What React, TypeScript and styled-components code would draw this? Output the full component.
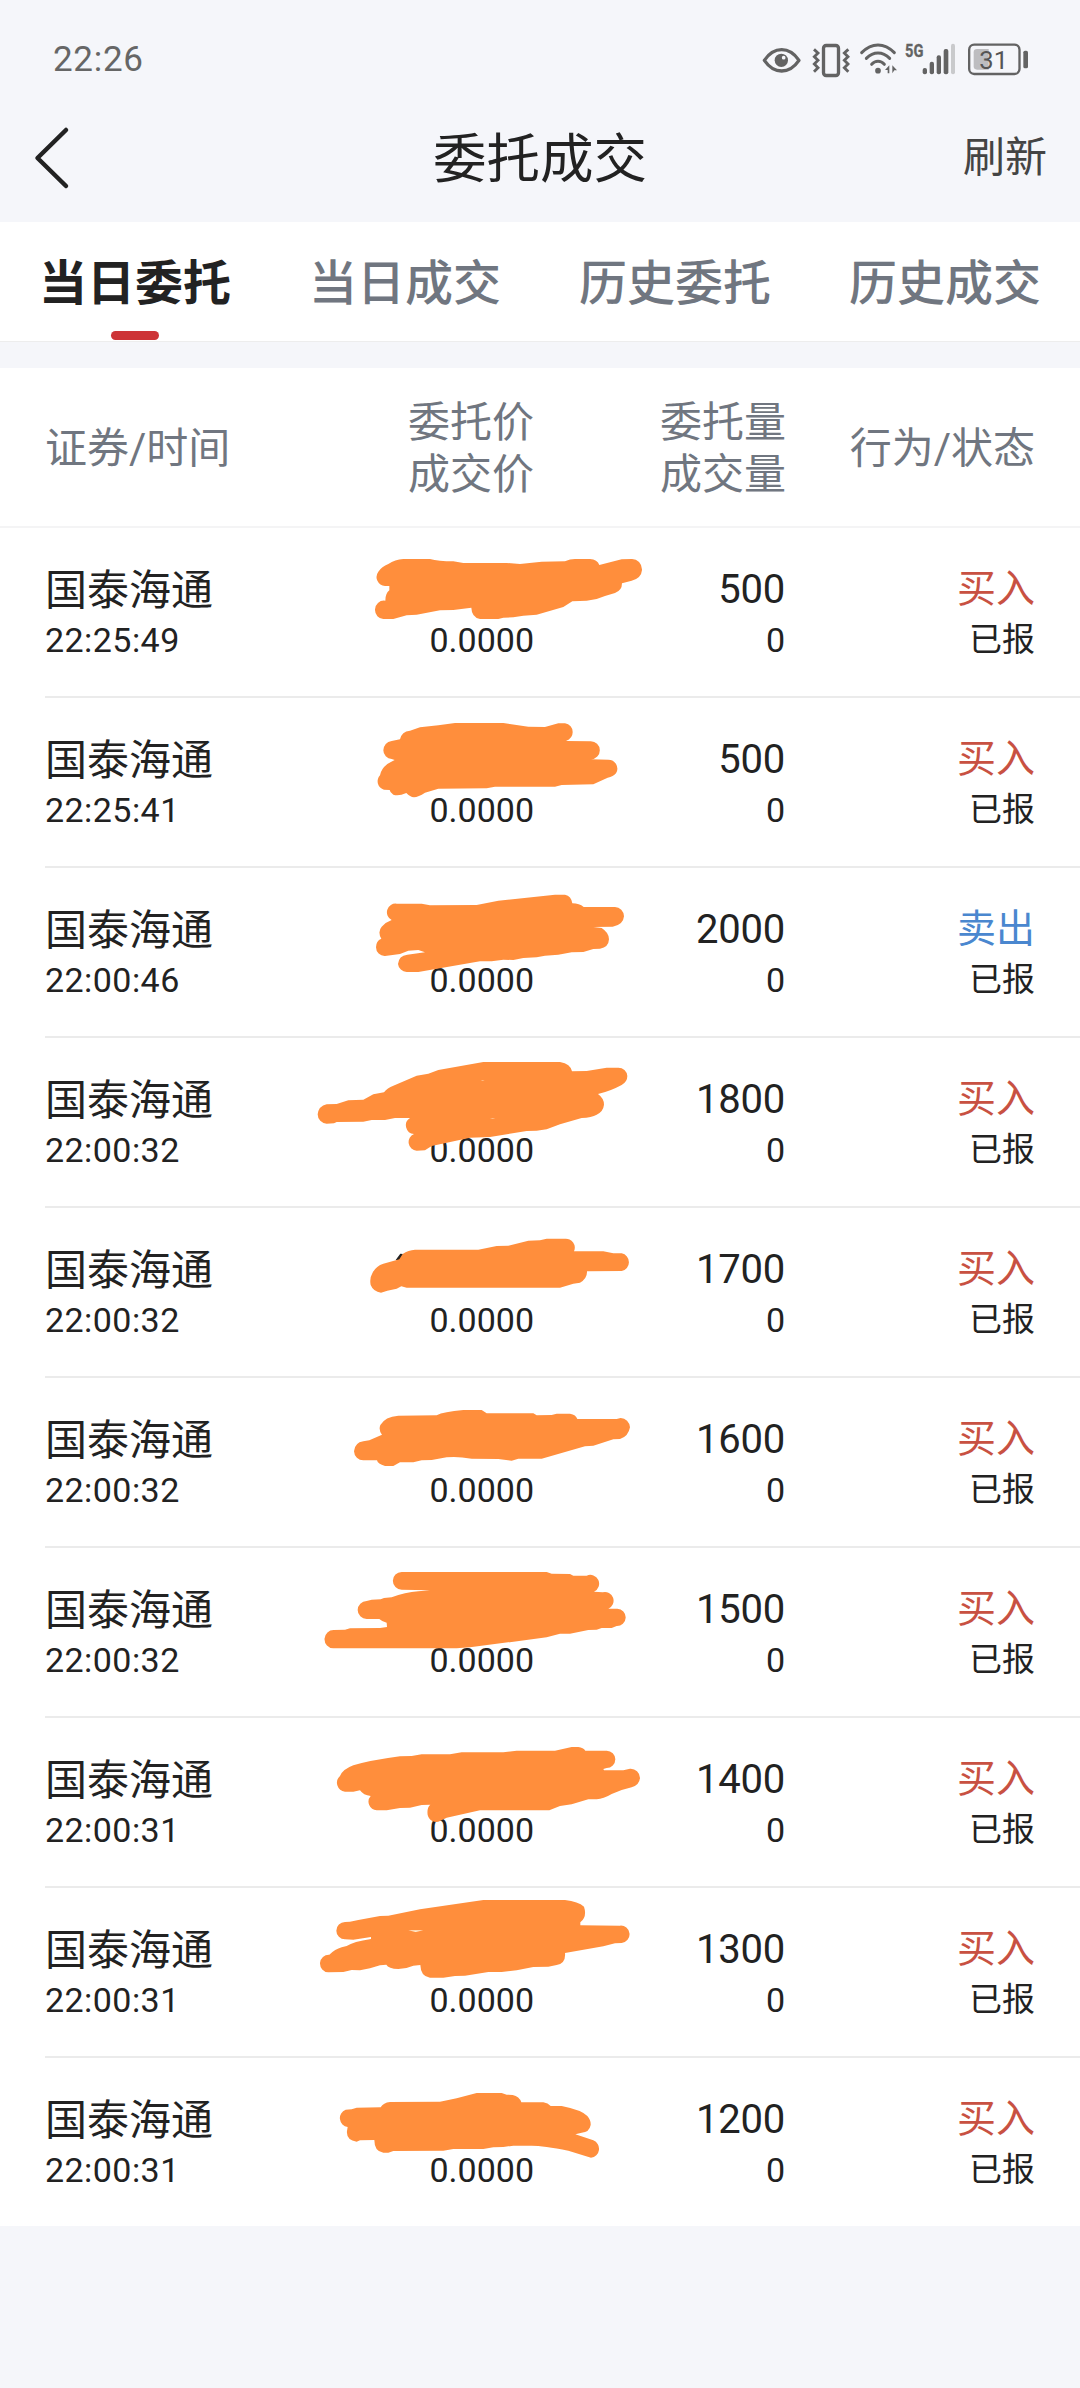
import React from "react";
import styled, { createGlobalStyle } from "styled-components";

const GlobalStyle = createGlobalStyle`
  * { box-sizing: border-box; }
  body {
    margin: 0;
    background: #f5f6fa;
    font-family: Roboto, "Noto Sans CJK SC", sans-serif;
    color: #222;
  }
`;

const Screen = styled.div`
  width: 1080px;
  min-height: 2388px;
  display: flex;
  flex-direction: column;
  background: #f5f6fa;
`;

const StatusBar = styled.header`
  height: 102px;
  padding: 18px 48px 0 53px;
  display: flex;
  align-items: center;
  justify-content: space-between;
`;

const Clock = styled.span`
  font-size: 35px;
  line-height: 40px;
  letter-spacing: 0.7px;
  color: #666;
`;

const StatusIcons = styled.div`
  display: flex;
  color: #636363;
  svg { display: block; height: 40px; }
`;

const NavBar = styled.nav`
  height: 120px;
  padding: 0 33px 8px;
  display: grid;
  grid-template-columns: 1fr auto 1fr;
  align-items: center;
`;

const BackButton = styled.button`
  width: 38px;
  height: 64px;
  padding: 0;
  border: 0;
  background: none;
  svg { display: block; }
`;

const Title = styled.h1`
  margin: 3px 0 0;
  font-size: 53.5px;
  font-weight: 400;
  line-height: 70px;
`;

const Refresh = styled.button`
  justify-self: end;
  padding: 0;
  border: 0;
  background: none;
  font: inherit;
  font-size: 42px;
  line-height: 60px;
  color: #444;
`;

const Tabs = styled.div`
  height: 120px;
  display: grid;
  grid-template-columns: repeat(4, 270px);
  background: #fff;
  border-bottom: 1px solid #ededed;
`;

const Tab = styled.div<{ $active?: boolean }>`
  display: flex;
  flex-direction: column;
  align-items: center;
  padding-top: 26px;
  font-size: 48px;
  line-height: 72px;
  font-weight: ${(p) => (p.$active ? 700 : 500)};
  color: ${(p) => (p.$active ? "#222" : "#707680")};
`;

const Indicator = styled.span`
  width: 48px;
  height: 9px;
  margin-top: 11px;
  border-radius: 5px;
  background: #cd3437;
`;

const Table = styled.section`
  margin-top: 26px;
  background: #fff;
`;

const HeadRow = styled.div`
  height: 160px;
  padding: 3px 45px 0;
  display: grid;
  grid-template-columns: 489px 252px 249px;
  align-items: center;
  border-bottom: 2px solid #f4f4f5;
  font-size: 42px;
  line-height: 52px;
  color: #707680;
`;

const HeadCell = styled.div`
  text-align: right;
`;

const HeadSplit = styled.div`
  display: flex;
  justify-content: space-between;
  align-items: center;
  text-align: right;
`;

const Row = styled.div`
  position: relative;
  height: 170px;
  margin-left: 45px;
  padding: 37px 45px 0 0;
  display: grid;
  grid-template-columns: 244px 245px 251px 250px;
  align-content: start;
  border-bottom: 2px solid #ebebeb;
  &:last-child { border-bottom: 0; height: 168px; }
`;

const Cell = styled.div<{ $right?: boolean }>`
  height: 98px;
  display: flex;
  flex-direction: column;
  justify-content: ${(p) => (p.$right ? "space-between" : "flex-start")};
  text-align: ${(p) => (p.$right ? "right" : "left")};
`;

const PriceCell = styled(Cell)`
  justify-content: flex-end;
`;

const Name = styled.span`
  font-size: 42px;
  line-height: 52px;
`;

const Time = styled.span`
  font-size: 34px;
  line-height: 46px;
  letter-spacing: 0.45px;
`;

const Quantity = styled.span`
  font-size: 40px;
  line-height: 49px;
  letter-spacing: -0.2px;
`;

const Filled = styled.span`
  font-size: 34px;
  line-height: 46px;
`;

const Side = styled.span<{ $sell?: boolean }>`
  font-size: 39px;
  line-height: 49px;
  color: ${(p) => (p.$sell ? "#4a87cf" : "#c85142")};
`;

const State = styled.span`
  font-size: 33px;
  line-height: 46px;
`;

const Scribble = styled.svg`
  position: absolute;
  left: 265px;
  top: 0;
  width: 350px;
  height: 170px;
  overflow: visible;
`;

type Order = {
  time: string;
  qty: number;
  sell?: boolean;
  top: number;
  mark: string;
  dark?: string;
  gap?: string;
};

const orders: Order[] = [
  { time: "22:25:49", qty: 500, top: -36, mark: "M225 138 A27 27 0 0 1 205 95 Q215 80 235 72 Q255 58 280 57 L360 57 Q385 64 430 64 L460 69 L590 69 L630 72 L695 65 L765 64 Q780 57 795 57 L840 57 Q862 58 868 75 L935 58 L965 57 A30 32 0 0 1 996 90 Q994 115 965 122 L936 130 Q936 152 915 159 L885 168 L860 177 L830 182 L787 184 L760 201 L680 224 L640 227 L610 232 L580 233 L565 237 L510 237 Q485 232 484 203 L430 210 L390 211 L320 224 L290 226 L250 237 L220 237 A27 27 0 0 1 195 210 A27 27 0 0 1 226 182 Q226 160 238 151 L238 138Z" },
  { time: "22:25:41", qty: 500, top: 474, mark: "M254 660 L245 657 A26 26 0 0 1 220 631 Q222 607 245 603 L270 598 Q275 574 300 572 L330 562 L385 556 L435 549 L580 549 L655 560 L705 561 L745 550 L765 550 A26 26 0 0 1 788 577 Q788 595 768 603 L842 604 A27 27 0 0 1 843 658 L895 659 A27 27 0 0 1 918 700 Q910 710 893 713 L850 733 L755 735 L735 740 L555 740 L530 745 L385 746 L345 758 Q325 771 312 772 Q300 771 289 759 Q265 770 250 764 Q240 758 239 750 L222 749 A26 26 0 0 1 210 706 Q213 687 232 672 Q245 664 254 660Z" },
  { time: "22:00:46", qty: 2000, sell: true, top: -6, mark: "M245 150 A26 26 0 0 1 260 101 L335 101 L360 106 L500 105 L565 92 L735 74 L765 74 Q784 78 787 100 Q808 100 821 111 L915 111 A28 29 0 0 1 942 139 Q940 165 908 170 L850 171 L875 174 Q897 188 897 208 Q896 232 870 236 L850 237 L820 246 L785 247 L745 254 L705 257 L680 262 L640 264 L610 270 L580 269 L545 274 L510 274 L325 306 L290 306 A27 27 0 0 1 264 282 Q266 257 292 254 L345 247 L325 240 L295 242 L270 252 L225 258 A26 26 0 0 1 198 232 Q198 212 214 206 Q202 185 215 170 Q228 156 245 150Z" },
  { time: "22:00:32", qty: 1800, top: 504, mark: "M50 761 A28 28 0 0 1 23 733 Q26 708 50 703 L80 702 L115 691 L160 689 L190 673 L222 667 Q232 653 250 647 L320 617 L355 611 L385 600 L520 576 L750 576 Q782 582 786 604 L830 603 L890 593 L925 593 A27 27 0 0 1 952 618 Q952 635 935 645 Q900 664 864 672 Q882 685 882 704 Q880 724 860 734 Q845 743 815 744 L750 763 L710 778 L680 782 L650 783 L540 801 L480 803 L365 828 L345 841 L320 842 A26 26 0 0 1 312 792 A26 26 0 0 1 300 744 L255 744 L225 750 L185 750 L160 755 L80 756 L72 760Z", gap: "M512 632 L518 631 L524 632Z M540 746 L548 745 L556 746Z" },
  { time: "22:00:32", qty: 1700, top: -6, dark: "M257 150 L271 131 L279 132 L272 150Z", mark: "M213 248 Q190 245 182 225 Q178 205 187 190 Q197 168 220 161 L268 148 L278 132 Q295 120 315 119 L505 119 L560 108 L595 107 L655 92 L690 91 L710 86 L765 86 A27 27 0 0 1 792 124 L880 124 L910 130 L935 130 A27 27 0 0 1 935 183 L831 184 Q832 205 810 218 L790 221 L770 227 L750 233 L290 233 L274 229 L260 236 L232 242Z" },
  { time: "22:00:32", qty: 1600, top: 504, mark: "M216 674 Q205 660 211 645 Q225 620 265 617 L380 616 Q400 605 460 600 L515 600 L530 610 L670 610 L680 616 L725 615 L740 611 L780 611 Q798 614 802 627 L920 627 L932 624 A28 30 0 0 1 960 652 Q955 680 930 687 L910 688 L850 707 L825 709 L695 746 L625 746 L605 752 L565 747 L485 746 Q440 738 410 742 L365 750 L335 751 L310 757 L270 757 L250 768 L225 768 Q203 762 201 751 L160 751 A28 28 0 0 1 132 724 Q134 698 160 694 L178 691Z" },
  { time: "22:00:32", qty: 1500, top: -6, mark: "M360 121 L275 119 A26 26 0 0 1 275 66 L710 66 L725 71 L780 72 L790 77 L830 77 A26 26 0 0 1 852 125 L878 127 A26 26 0 0 1 895 176 L922 176 A26 26 0 0 1 920 228 L905 234 L875 234 L860 239 L835 240 L780 251 L750 251 L710 262 L480 292 L440 295 L70 295 A27 27 0 0 1 72 240 L105 239 L120 235 L210 234 L231 231 L230 218 Q215 214 208 207 L170 207 A27 27 0 0 1 170 153 L185 149 L212 148 L222 144 L245 142 Q285 127 325 124Z" },
  { time: "22:00:31", qty: 1400, top: 504, mark: "M105 725 A27 27 0 0 1 90 678 Q98 658 130 646 Q180 631 270 619 L305 618 L335 613 L420 613 L455 607 L580 607 L620 602 L735 602 L785 591 L805 591 Q820 593 826 602 L890 602 A26 26 0 0 1 890 654 L880 657 L882 661 L940 661 L960 656 A28 28 0 0 1 990 684 Q988 705 965 712 L935 720 L905 732 Q880 747 860 748 L835 748 L785 763 L750 768 L718 781 L510 781 L410 803 L390 813 A26 26 0 0 1 353 795 Q350 773 361 764 L335 765 L300 773 L270 774 L230 781 L200 781 A26 26 0 0 1 182 738 Q160 736 150 721 L130 725Z" },
  { time: "22:00:31", qty: 1300, top: 24, gap: "M295 151 L340 151 L317 156Z", mark: "M130 179 L105 178 A26 26 0 0 1 105 126 L120 125 L145 120 L210 108 L235 107 L330 88 L520 60 L765 60 Q805 65 822 80 Q832 110 811 127 L811 136 L930 137 A26 26 0 0 1 935 189 L915 190 L880 199 L765 219 Q768 250 740 255 L715 260 L670 261 L620 271 L575 276 L535 276 L465 287 L435 288 L400 293 L360 293 Q332 290 331 255 L310 257 Q290 266 265 267 Q235 266 229 254 L210 256 L180 265 L150 271 L125 270 L100 276 L55 277 A26 26 0 0 1 58 224 Q75 208 95 202 L110 198 Q130 185 183 177 L183 171Z" },
  { time: "22:00:31", qty: 1200, top: 534, mark: "M113 741 A27 27 0 0 1 107 689 L125 688 L140 683 L212 682 Q220 668 240 666 L390 665 L440 655 L500 639 L575 639 L590 644 L608 645 Q628 649 634 667 L700 667 Q714 669 722 678 L755 678 Q815 690 832 708 Q843 720 842 735 Q838 757 815 758 L796 763 L850 781 A27 27 0 0 1 843 833 L775 812 Q700 797 665 797 L610 797 L580 801 L550 802 L520 807 L430 807 L400 812 L250 813 L235 818 L220 818 Q193 815 193 780 L150 781 L140 785 Q108 780 111 753Z" },
];

const EyeIcon = () => (
  <svg width="50" viewBox="60 60 150 120" fill="none">
    <path d="M73 121 Q95 89 125 89 Q155 89 177 121 Q155 153 125 153 Q95 153 73 121Z" stroke="currentColor" strokeWidth="10" strokeLinejoin="round" />
    <circle cx="124" cy="121" r="20" fill="currentColor" />
    <circle cx="131" cy="113" r="5.5" fill="#f5f6fa" />
  </svg>
);

const VibrateIcon = () => (
  <svg width="45" viewBox="210 60 135 120" fill="none" stroke="currentColor" strokeWidth="8.5">
    <rect x="250.5" y="76.5" width="45" height="90" rx="8" strokeWidth="10" />
    <path d="M222 88 L234 99 L223 110 L234 121 L223 132 L234 143 L222 155" />
    <path d="M325 88 L313 99 L324 110 L313 121 L324 132 L313 143 L325 155" />
  </svg>
);

const WifiIcon = () => (
  <svg width="47" viewBox="345 60 141 120" fill="none">
    <g stroke="currentColor" strokeWidth="9" strokeLinecap="round">
      <path d="M365 98 Q388 75 414 75 Q440 75 463 98" />
      <path d="M379 115 Q395 99 414 99 Q433 99 449 115" />
      <path d="M395 133 Q403 124 414 124 Q425 124 433 133" />
    </g>
    <circle cx="414" cy="152" r="8.5" fill="currentColor" />
    <path d="M448 136 V160 H443 V150 H435Z M457 136 L471 151 H463 L457 160Z" fill="currentColor" />
  </svg>
);

const SignalIcon = () => (
  <svg width="60" viewBox="486 60 180 120" fill="currentColor">
    <text x="495" y="111" fontFamily="Roboto, sans-serif" fontSize="56" fontWeight="700" stroke="currentColor" strokeWidth="1" textLength="55" lengthAdjust="spacingAndGlyphs">5G</text>
    <rect x="548" y="144" width="13" height="19" rx="6" />
    <rect x="569" y="125" width="13" height="38" rx="6" />
    <rect x="590" y="106" width="13" height="57" rx="6" />
    <rect x="611" y="87" width="14" height="76" rx="6" />
    <rect x="633" y="71" width="12" height="92" rx="6" opacity="0.3" />
  </svg>
);

const BatteryIcon = () => (
  <svg width="70" viewBox="666 60 210 120">
    <rect x="687.5" y="74" width="151" height="88" rx="15" fill="none" stroke="currentColor" strokeWidth="7" />
    <path d="M711 87 H746 V149 H711 Q701 149 701 139 V97 Q701 87 711 87Z" fill="#bdbdc0" />
    <rect x="850" y="92" width="14" height="53" rx="5" fill="currentColor" />
    <text x="718" y="146" fontFamily="Roboto, sans-serif" fontSize="77" fill="#555" textLength="86" lengthAdjust="spacingAndGlyphs">31</text>
  </svg>
);

const OrderRow = ({ order }: { order: Order }) => (
  <Row>
    <Cell>
      <Name>国泰海通</Name>
      <Time>{order.time}</Time>
    </Cell>
    <PriceCell $right>
      <Filled>0.0000</Filled>
    </PriceCell>
    <Cell $right>
      <Quantity>{order.qty}</Quantity>
      <Filled>0</Filled>
    </Cell>
    <Cell $right>
      <Side $sell={order.sell}>{order.sell ? "卖出" : "买入"}</Side>
      <State>已报</State>
    </Cell>
    <Scribble viewBox={`0 ${order.top} 1050 510`}>
      {order.dark && <path d={order.dark} fill="#222" />}
      <path d={order.mark} fill="#ff8e3c" />
      {order.gap && <path d={order.gap} fill="#fff0d8" />}
    </Scribble>
  </Row>
);

export default function App() {
  return (
    <>
      <GlobalStyle />
      <Screen>
        <StatusBar>
          <Clock>22:26</Clock>
          <StatusIcons>
            <EyeIcon />
            <VibrateIcon />
            <WifiIcon />
            <SignalIcon />
            <BatteryIcon />
          </StatusIcons>
        </StatusBar>
        <NavBar>
          <BackButton aria-label="返回">
            <svg width="38" height="64" viewBox="0 0 38 64" fill="none" stroke="#222" strokeWidth="4.5" strokeLinecap="round" strokeLinejoin="round">
              <path d="M33 4 L4.5 32 L33 60" />
            </svg>
          </BackButton>
          <Title>委托成交</Title>
          <Refresh>刷新</Refresh>
        </NavBar>
        <Tabs>
          <Tab $active>
            当日委托
            <Indicator />
          </Tab>
          <Tab>当日成交</Tab>
          <Tab>历史委托</Tab>
          <Tab>历史成交</Tab>
        </Tabs>
        <Table>
          <HeadRow>
            <HeadSplit>
              <span>证券/时间</span>
              <span>委托价<br />成交价</span>
            </HeadSplit>
            <HeadCell>委托量<br />成交量</HeadCell>
            <HeadCell>行为/状态</HeadCell>
          </HeadRow>
          <div>
            {orders.map((order) => (
              <OrderRow key={order.qty + order.time} order={order} />
            ))}
          </div>
        </Table>
      </Screen>
    </>
  );
}
